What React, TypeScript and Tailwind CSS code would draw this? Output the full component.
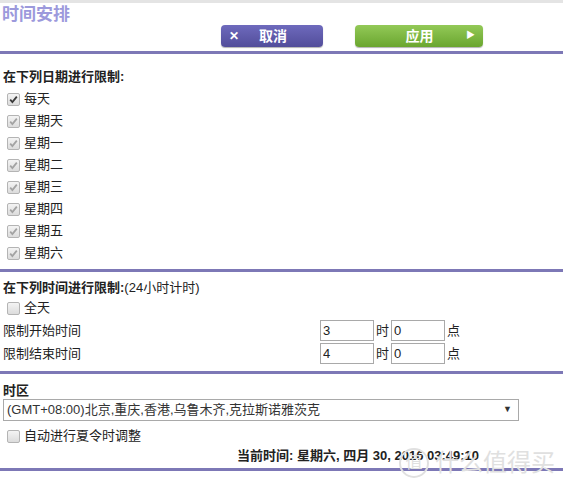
import React from "react";

const days = ["星期天", "星期一", "星期二", "星期三", "星期四", "星期五", "星期六"];

const font = { fontFamily: '"Liberation Sans", "Noto Sans CJK SC", sans-serif' };

function Divider() {
  return <div className="h-[3px] bg-[#7d78b6]" />;
}

function Box({ checked, disabled }: { checked?: boolean; disabled?: boolean }) {
  return (
    <span className="flex h-[13px] w-[13px] items-center justify-center rounded-[2px] border border-[#b4b4b4] bg-gradient-to-b from-[#f4f4f4] to-[#dcdcdc]">
      {checked && (
        <svg width="9" height="9" viewBox="0 0 9 9">
          <path
            d="M1.2 4.6 L3.4 7 L7.8 1.6"
            fill="none"
            stroke={disabled ? "#a3a3a3" : "#3a3a3a"}
            strokeWidth="1.8"
          />
        </svg>
      )}
    </span>
  );
}

function CheckRow({ label, checked, disabled, className = "" }: { label: string; checked?: boolean; disabled?: boolean; className?: string }) {
  return (
    <div className={`flex h-[22px] items-center gap-[4px] pl-[7px] ${className}`}>
      <Box checked={checked} disabled={disabled} />
      <span>{label}</span>
    </div>
  );
}

function TimeRow({ label, hour }: { label: string; hour: string }) {
  return (
    <div className="flex h-[23px] items-center pl-[3px]">
      <span className="w-[317px]">{label}</span>
      <input defaultValue={hour} className="h-[21px] w-[54px] border border-[#a9a9a9] px-[2px] text-[13px] outline-none" />
      <span className="px-[2px]">时</span>
      <input defaultValue="0" className="h-[21px] w-[54px] border border-[#a9a9a9] px-[2px] text-[13px] outline-none" />
      <span className="px-[2px]">点</span>
    </div>
  );
}

export default function App() {
  return (
    <div className="relative h-[491px] w-[563px] overflow-hidden bg-white text-[13px] text-[#222]" style={font}>
      <div className="h-[3px] bg-[#e4e4e4]" />
      <div className="pl-[2px] pt-[3px] text-[17px] font-bold leading-[18px] text-[#9c99dc]">时间安排</div>

      {/* action buttons */}
      <div className="ml-[221px] mt-[1px] flex gap-[32px]">
        <button className="flex h-[22px] w-[102px] items-center rounded-[4px] bg-gradient-to-b from-[#6e6abd] to-[#524d9a] px-[8px] text-[14px] font-bold text-white shadow-[0_1px_1px_rgba(0,0,0,0.3)]">
          <span className="text-[12px]">✕</span>
          <span className="flex-1 pr-[8px] text-center">取消</span>
        </button>
        <button className="flex h-[22px] w-[128px] items-center rounded-[4px] bg-gradient-to-b from-[#93c957] to-[#6aa62e] px-[8px] text-[14px] font-bold text-white shadow-[0_1px_1px_rgba(0,0,0,0.3)]">
          <span className="flex-1 pl-[10px] text-center">应用</span>
          <span className="text-[9px]">▶</span>
        </button>
      </div>
      <div className="mt-[4px]">
        <Divider />
      </div>

      {/* days */}
      <div className="pb-[5px] pt-[14px]">
        <div className="pl-[3px] font-bold leading-[18px]">在下列日期进行限制:</div>
        <div className="mt-[2px]">
          <CheckRow label="每天" checked />
          {days.map((d) => (
            <CheckRow key={d} label={d} checked disabled />
          ))}
        </div>
      </div>
      <Divider />

      {/* time */}
      <div className="pb-[6px] pt-[7px]">
        <div className="pl-[3px] leading-[18px]">
          <span className="font-bold">在下列时间进行限制:</span>(24小时计时)
        </div>
        <CheckRow label="全天" />
        <TimeRow label="限制开始时间" hour="3" />
        <TimeRow label="限制结束时间" hour="4" />
      </div>
      <Divider />

      {/* timezone */}
      <div className="pb-[3px] pt-[8px]">
        <div className="pl-[3px] font-bold leading-[18px]">时区</div>
        <div className="ml-[3px] mt-[-1px] flex h-[22px] w-[516px] items-center border border-[#a9a9a9] pl-[3px] pr-[6px] text-[#333]">
          <span className="flex-1">(GMT+08:00)北京,重庆,香港,乌鲁木齐,克拉斯诺雅茨克</span>
          <span className="text-[9px]">▼</span>
        </div>
        <CheckRow label="自动进行夏令时调整" className="mt-[4px]" />
        <div className="pl-[237px] font-bold leading-[18px]">当前时间: 星期六, 四月 30, 2016 03:49:10</div>
      </div>
      <Divider />

      {/* watermark */}
      <div className="pointer-events-none absolute bottom-[10px] right-[8px] flex items-center gap-[6px] text-[24px] text-[#e0e0e0]">
        <span className="flex h-[30px] w-[30px] items-center justify-center rounded-full border-2 border-[#e0e0e0] text-[17px]">值</span>
        <span>什么值得买</span>
      </div>
    </div>
  );
}
